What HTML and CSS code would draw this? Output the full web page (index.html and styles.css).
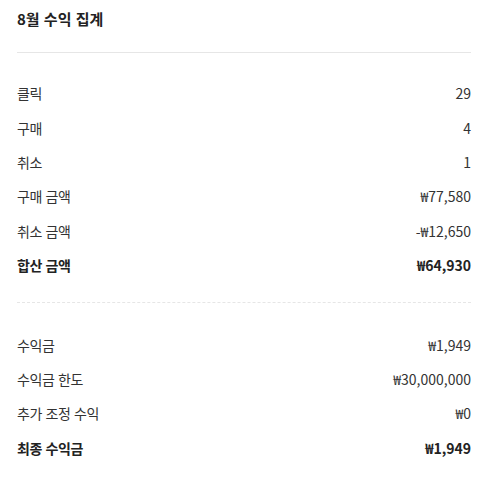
FILE: index.html
```html
<!DOCTYPE html>
<html lang="ko">
<head>
    <meta charset="UTF-8">
    <title>8월 수익 집계</title>
    <link rel="stylesheet" href="styles.css">
</head>
<body>
    <div class="summary">
        <h2 class="summary-title">8월 수익 집계</h2>

        <div class="summary-group">
            <div class="row"><span>클릭</span><span>29</span></div>
            <div class="row"><span>구매</span><span>4</span></div>
            <div class="row"><span>취소</span><span>1</span></div>
            <div class="row"><span>구매 금액</span><span>₩77,580</span></div>
            <div class="row"><span>취소 금액</span><span>-₩12,650</span></div>
            <div class="row total"><span>합산 금액</span><span>₩64,930</span></div>
        </div>

        <div class="summary-group dashed">
            <div class="row"><span>수익금</span><span>₩1,949</span></div>
            <div class="row"><span>수익금 한도</span><span>₩30,000,000</span></div>
            <div class="row"><span>추가 조정 수익</span><span>₩0</span></div>
            <div class="row total"><span>최종 수익금</span><span>₩1,949</span></div>
        </div>
    </div>
</body>
</html>
```

FILE: styles.css
```css
body {
    margin: 0;
    background-color: #fff;
    font-family: "Noto Sans CJK KR", "Noto Sans", sans-serif;
    color: #333;
}

.summary {
    width: 454px;
    padding: 0 17px;
}

.summary-title {
    margin: 0;
    padding: 8px 0 22px;
    font-size: 15px;
    line-height: 22px;
    font-weight: bold;
    color: #222;
    border-bottom: 1px solid #e6e6e6;
}

.summary-group {
    padding: 23px 0 20px;
}

.summary-group.dashed {
    border-top: 1px dashed #e6e6e6;
    padding-top: 24px;
}

.row {
    display: flex;
    justify-content: space-between;
    align-items: center;
    height: 34.4px;
    font-size: 14px;
    letter-spacing: -0.4px;
}

.row span:last-child {
    letter-spacing: 0;
}

.row.total {
    font-weight: bold;
    color: #222;
}
```
